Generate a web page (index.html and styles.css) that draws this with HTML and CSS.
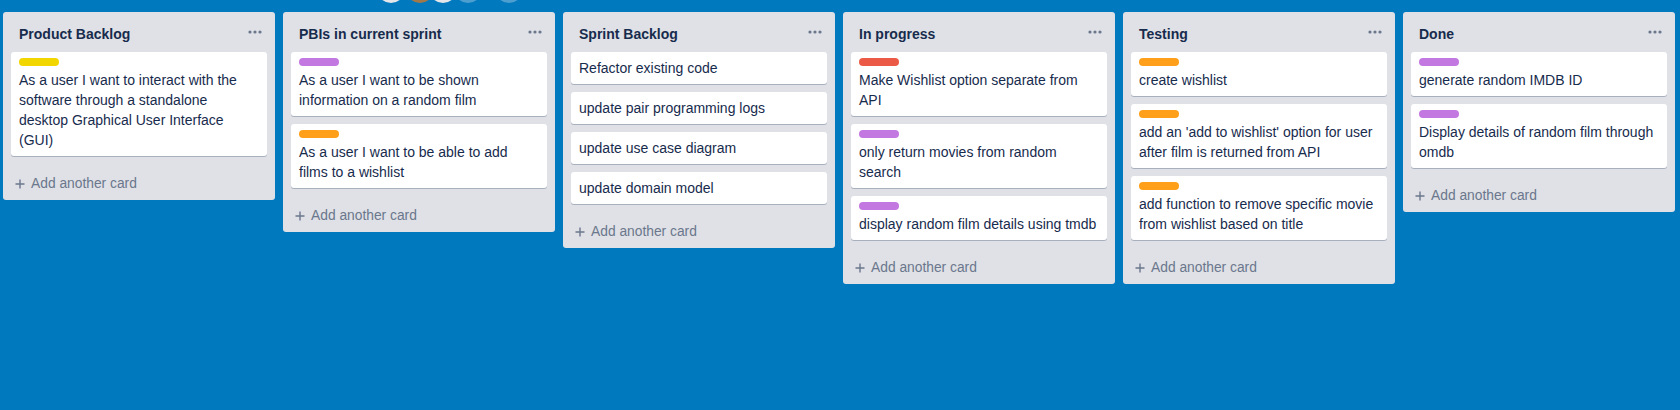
FILE: index.html
```html
<!DOCTYPE html>
<html lang="en">
<head>
<meta charset="utf-8">
<title>Board</title>
<link rel="stylesheet" href="styles.css">
</head>
<body>
<div class="board-header">
  <span class="avatar av-white a1"></span>
  <span class="avatar av-photo a2"></span>
  <span class="avatar av-white a3"></span>
  <span class="avatar av-blue a4"></span>
  <span class="avatar av-blue a5"></span>
</div>
<div class="board">

  <div class="list">
    <div class="list-header"><h2 class="list-title">Product Backlog</h2><svg class="dots" width="14" height="4" viewBox="0 0 14 4"><circle cx="2" cy="2" r="1.6"/><circle cx="7" cy="2" r="1.6"/><circle cx="12" cy="2" r="1.6"/></svg></div>
    <div class="cards">
      <div class="card"><div class="label yellow"></div><div class="card-title">As a user I want to interact with the software through a standalone desktop Graphical User Interface (GUI)</div></div>
    </div>
    <div class="composer"><svg class="plus" width="10" height="10" viewBox="0 0 10 10"><path d="M5 0.5V9.5M0.5 5H9.5"/></svg><span>Add another card</span></div>
  </div>

  <div class="list">
    <div class="list-header"><h2 class="list-title">PBIs in current sprint</h2><svg class="dots" width="14" height="4" viewBox="0 0 14 4"><circle cx="2" cy="2" r="1.6"/><circle cx="7" cy="2" r="1.6"/><circle cx="12" cy="2" r="1.6"/></svg></div>
    <div class="cards">
      <div class="card"><div class="label purple"></div><div class="card-title">As a user I want to be shown information on a random film</div></div>
      <div class="card"><div class="label orange"></div><div class="card-title">As a user I want to be able to add films to a wishlist</div></div>
    </div>
    <div class="composer"><svg class="plus" width="10" height="10" viewBox="0 0 10 10"><path d="M5 0.5V9.5M0.5 5H9.5"/></svg><span>Add another card</span></div>
  </div>

  <div class="list">
    <div class="list-header"><h2 class="list-title">Sprint Backlog</h2><svg class="dots" width="14" height="4" viewBox="0 0 14 4"><circle cx="2" cy="2" r="1.6"/><circle cx="7" cy="2" r="1.6"/><circle cx="12" cy="2" r="1.6"/></svg></div>
    <div class="cards">
      <div class="card"><div class="card-title">Refactor existing code</div></div>
      <div class="card"><div class="card-title">update pair programming logs</div></div>
      <div class="card"><div class="card-title">update use case diagram</div></div>
      <div class="card"><div class="card-title">update domain model</div></div>
    </div>
    <div class="composer"><svg class="plus" width="10" height="10" viewBox="0 0 10 10"><path d="M5 0.5V9.5M0.5 5H9.5"/></svg><span>Add another card</span></div>
  </div>

  <div class="list">
    <div class="list-header"><h2 class="list-title">In progress</h2><svg class="dots" width="14" height="4" viewBox="0 0 14 4"><circle cx="2" cy="2" r="1.6"/><circle cx="7" cy="2" r="1.6"/><circle cx="12" cy="2" r="1.6"/></svg></div>
    <div class="cards">
      <div class="card"><div class="label red"></div><div class="card-title">Make Wishlist option separate from API</div></div>
      <div class="card"><div class="label purple"></div><div class="card-title">only return movies from random search</div></div>
      <div class="card"><div class="label purple"></div><div class="card-title">display random film details using tmdb</div></div>
    </div>
    <div class="composer"><svg class="plus" width="10" height="10" viewBox="0 0 10 10"><path d="M5 0.5V9.5M0.5 5H9.5"/></svg><span>Add another card</span></div>
  </div>

  <div class="list">
    <div class="list-header"><h2 class="list-title">Testing</h2><svg class="dots" width="14" height="4" viewBox="0 0 14 4"><circle cx="2" cy="2" r="1.6"/><circle cx="7" cy="2" r="1.6"/><circle cx="12" cy="2" r="1.6"/></svg></div>
    <div class="cards">
      <div class="card"><div class="label orange"></div><div class="card-title">create wishlist</div></div>
      <div class="card"><div class="label orange"></div><div class="card-title">add an 'add to wishlist' option for user after film is returned from API</div></div>
      <div class="card"><div class="label orange"></div><div class="card-title">add function to remove specific movie from wishlist based on title</div></div>
    </div>
    <div class="composer"><svg class="plus" width="10" height="10" viewBox="0 0 10 10"><path d="M5 0.5V9.5M0.5 5H9.5"/></svg><span>Add another card</span></div>
  </div>

  <div class="list">
    <div class="list-header"><h2 class="list-title">Done</h2><svg class="dots" width="14" height="4" viewBox="0 0 14 4"><circle cx="2" cy="2" r="1.6"/><circle cx="7" cy="2" r="1.6"/><circle cx="12" cy="2" r="1.6"/></svg></div>
    <div class="cards">
      <div class="card"><div class="label purple"></div><div class="card-title">generate random IMDB ID</div></div>
      <div class="card"><div class="label purple"></div><div class="card-title">Display details of random film through omdb</div></div>
    </div>
    <div class="composer"><svg class="plus" width="10" height="10" viewBox="0 0 10 10"><path d="M5 0.5V9.5M0.5 5H9.5"/></svg><span>Add another card</span></div>
  </div>

</div>
</body>
</html>
```
FILE: styles.css
```css
html, body {
  margin: 0;
  padding: 0;
}
body {
  width: 1680px;
  height: 410px;
  overflow: hidden;
  background: #0079bf;
  font-family: "Liberation Sans", Arial, Helvetica, sans-serif;
  font-size: 14px;
  line-height: 20px;
  color: #172b4d;
}
.board-header {
  height: 12px;
  display: flex;
  align-items: flex-end;
  padding-left: 377px;
}
.avatar {
  flex: none;
  width: 28px;
  height: 28px;
  border-radius: 50%;
  margin-bottom: 9px;
}
.av-white { background: #e4e6ea; }
.av-photo { background: #a0784a; }
.av-blue { background: #4d9fd0; }
.a2 { margin-left: 1px; }
.a3 { margin-left: -5px; }
.a4 { margin-left: -3px; }
.a5 { margin-left: 13px; }

.board {
  display: flex;
  align-items: flex-start;
  gap: 8px;
  padding-left: 3px;
}
.list {
  flex: none;
  width: 272px;
  background: #dfe1e6;
  border-radius: 3px;
}
.list-header {
  display: flex;
  align-items: center;
  justify-content: space-between;
  padding: 12px 13px 8px 16px;
}
.list-title {
  margin: 0;
  font-size: 14px;
  line-height: 20px;
  font-weight: 700;
  color: #172b4d;
}
.dots {
  fill: #6b778c;
  margin-top: -4px;
}
.cards {
  display: flow-root;
  padding: 0 8px;
}
.card {
  background: #fff;
  border-radius: 3px;
  box-shadow: 0 1px 0 rgba(9, 30, 66, 0.25);
  margin-bottom: 8px;
  padding: 6px 8px 6px;
}
.label {
  width: 40px;
  height: 8px;
  border-radius: 4px;
  margin-bottom: 4px;
}
.yellow { background: #f2d600; }
.purple { background: #c377e0; }
.orange { background: #ff9f1a; }
.red { background: #eb5a46; }
.card-title {
  font-size: 14px;
  line-height: 20px;
  color: #172b4d;
  word-wrap: break-word;
}
.composer {
  display: flex;
  align-items: center;
  gap: 6px;
  margin: 6px 8px 2px;
  padding: 4px 4px;
  color: #6b778c;
  font-size: 13.8px;
  line-height: 20px;
}
.plus {
  stroke: #6b778c;
  stroke-width: 1.4;
  fill: none;
  flex: none;
}
```
